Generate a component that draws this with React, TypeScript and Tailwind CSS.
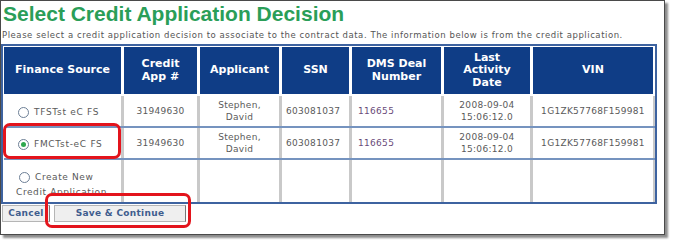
import React from "react";

const cols = "grid-cols-[117px_73px_79px_67px_89px_86px_120px]";

function Radio({ checked }: { checked?: boolean }) {
  return (
    <span className="inline-flex h-[11px] w-[11px] shrink-0 items-center justify-center rounded-full border border-[#6d7f96] bg-white">
      {checked && <span className="h-[5px] w-[5px] rounded-full bg-[#2fa84f]" />}
    </span>
  );
}

const body = "font-['DejaVu_Sans',Verdana,sans-serif] text-[9px] leading-[12px] tracking-[0.3px] text-[#5a5a5a]";

export default function App() {
  const headers = [
    "Finance Source",
    "Credit\nApp #",
    "Applicant",
    "SSN",
    "DMS Deal\nNumber",
    "Last\nActivity\nDate",
    "VIN",
  ];
  const dataRow = ["31949630", "Stephen,\nDavid", "603081037", "116655", "2008-09-04\n15:06:12.0", "1G1ZK57768F159981"];
  return (
    <div className="relative h-[243px] w-[673px] overflow-hidden bg-white">
      <div className="h-[235px] w-[665px] border-[1.5px] border-[#4a4a4a] bg-white shadow-[3px_3px_2px_rgba(0,0,0,0.45)]">
        <div className="pl-[2px] font-['Liberation_Sans',Arial,sans-serif] text-[21px] font-bold leading-[26px] text-[#2a9e58]">
          Select Credit Application Decision
        </div>
        <div className="mt-[3px] pl-[1px] font-['DejaVu_Sans',Verdana,sans-serif] text-[8.5px] leading-[11px] tracking-[0.55px] text-[#555] whitespace-nowrap">
          Please select a credit application decision to associate to the contract data. The information below is from the credit application.
        </div>
        <div className="mt-[3px] w-[656px] border-[2px] border-[#3e63a0] bg-white pl-[1px] pt-[1px]">
          <div className={`grid ${cols} gap-x-[3px] bg-white pb-[2px]`}>
            {headers.map((h, i) => (
              <div
                key={i}
                className="flex h-[47px] items-center justify-center whitespace-pre-line bg-[#0f3d86] text-center font-['DejaVu_Sans',Verdana,sans-serif] text-[11px] font-bold leading-[12.5px] text-white"
              >
                {h}
              </div>
            ))}
          </div>
          {[false, true].map((checked, r) => (
            <div key={r} className={`grid ${cols} gap-x-[3px] border-b-[2px] border-[#7593bf] bg-[#c9c9c9] ${body}`}>
              <div className="flex h-[30px] items-center gap-[5px] bg-white pl-[14px] pt-[2px] tracking-[0.7px]">
                <Radio checked={checked} />
                <span>{checked ? "FMCTst-eC FS" : "TFSTst eC FS"}</span>
              </div>
              {dataRow.map((d, i) => (
                <div
                  key={i}
                  className={`flex h-[30px] items-center whitespace-pre-line bg-white ${
                    i === 3 ? "justify-start pl-[6px] text-[#6a4c7a]" : i === 2 ? "justify-start pl-[4px]" : "justify-center text-center"
                  }`}
                >
                  {d}
                </div>
              ))}
            </div>
          ))}
          <div className={`grid ${cols} gap-x-[3px] bg-[#c9c9c9] ${body}`}>
            <div className="h-[42px] bg-white pl-[12px] pt-[11px] tracking-[0.6px]">
              <div className="h-[25px] overflow-hidden">
                <div className="flex items-center gap-[5px] pl-[3px]">
                  <Radio />
                  <span>Create New</span>
                </div>
                <div className="pt-[3px]">Credit Application</div>
              </div>
            </div>
            {[0, 1, 2, 3, 4, 5].map((i) => (
              <div key={i} className="h-[42px] bg-white" />
            ))}
          </div>
        </div>
        <div className="mt-[1px] flex gap-[4px] pl-[1px] font-['DejaVu_Sans',Verdana,sans-serif] text-[9px] font-bold tracking-[0.3px] text-[#3f5d8e]">
          <div className="flex h-[17px] w-[48px] items-center justify-center border border-[#b5b5b5] border-r-[#777] bg-[#efefef]">
            Cancel
          </div>
          <div className="flex h-[17px] w-[132px] items-center justify-center border border-[#b5b5b5] border-r-[#777] bg-[#efefef]">
            Save &amp; Continue
          </div>
        </div>
      </div>
      <div className="pointer-events-none absolute left-[3px] top-[123px] h-[36px] w-[118px] rounded-[7px] border-[3px] border-[#e3141c]" />
      <div className="pointer-events-none absolute left-[45px] top-[193px] h-[35px] w-[146px] rounded-[7px] border-[3px] border-[#e3141c]" />
    </div>
  );
}
